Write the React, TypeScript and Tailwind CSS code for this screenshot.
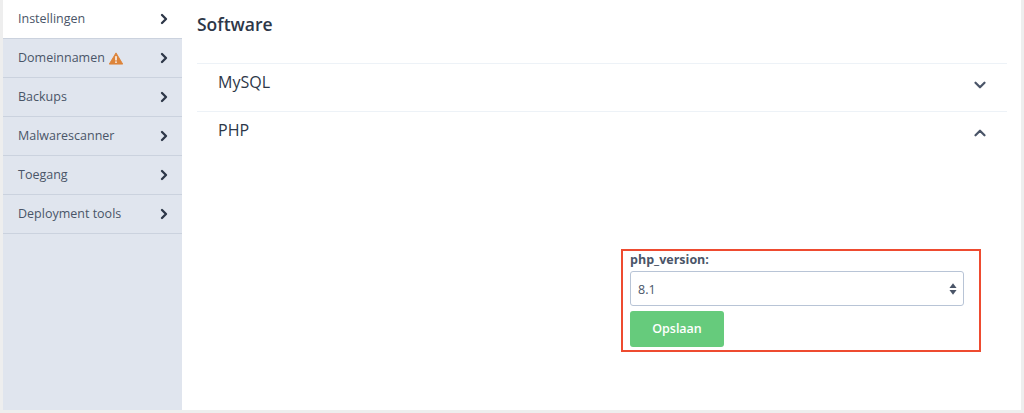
import React from "react";
import { ChevronRight, ChevronDown, ChevronUp } from "lucide-react";

const menuItems = ["Instellingen", "Domeinnamen", "Backups", "Malwarescanner", "Toegang", "Deployment tools"];

const App = () => {
  return (
    <div className="h-[413px] w-[1024px] overflow-hidden bg-[#eeeeee] pl-[3px] pr-[3px] pb-[3px] text-[#374151] font-['Open_Sans',sans-serif]">
      <div className="flex h-full bg-white">
        <div className="w-[179px] shrink-0 bg-[#e0e5ee]">
          {menuItems.map((item, i) => (
            <div
              key={item}
              className={`flex h-[39px] items-center justify-between border-b border-[#cbd2de] pl-[15px] pr-[10px] text-[12.5px] text-[#4a5568] ${i === 0 ? "bg-white" : ""}`}
            >
              <span className="flex items-center gap-1">
                {item}
                {item === "Domeinnamen" && (
                  <svg width="14" height="13" viewBox="0 0 15 13">
                    <path d="M7.5 0.5 L14.7 12.5 L0.3 12.5 Z" fill="#dd843a" stroke="#dd843a" strokeLinejoin="round" />
                    <rect x="6.7" y="4" width="1.6" height="4.6" fill="#fff" />
                    <rect x="6.7" y="9.6" width="1.6" height="1.6" fill="#fff" />
                  </svg>
                )}
              </span>
              <ChevronRight size={16} strokeWidth={3.5} className="text-[#2d3748]" />
            </div>
          ))}
        </div>

        <div className="flex-1 pl-[15px] pr-[14px]">
          <h1 className="h-[64px] border-b border-[#edf2f7] pt-[11px] text-[17.5px] leading-[26px] font-semibold text-[#2d3748]">
            Software
          </h1>
          <div className="flex h-[48px] items-center justify-between border-b border-[#edf2f7] pb-[11px] pl-[21px] pr-[18px] text-[16px] text-[#2d3748]">
            MySQL
            <ChevronDown size={18} strokeWidth={3} className="mt-[5px] text-[#4a5568]" />
          </div>
          <div className="flex h-[47px] items-center justify-between pb-[11px] pl-[21px] pr-[18px] text-[16px] text-[#2d3748]">
            PHP
            <ChevronUp size={18} strokeWidth={3} className="mt-[6px] text-[#4a5568]" />
          </div>

          <div className="ml-[424px] mt-[90px] h-[103px] w-[360px] border-2 border-[#ee4b30] pl-[7px]">
            <div className="text-[12.5px] leading-[17px] font-bold text-[#4a5568]">php_version:</div>
            <div className="mt-[3px] flex h-[35px] w-[334px] items-center justify-between rounded-[3px] border border-[#b8c4d6] bg-white pl-[7px] pr-[6px] pt-[3px] text-[12.5px] text-[#4a5568]">
              8.1
              <svg width="8" height="14" viewBox="0 0 9 14" className="-mt-[3px]">
                <path d="M4.5 0.5 L8.5 6 L0.5 6 Z" fill="#4a5568" />
                <path d="M4.5 13.5 L8.5 8 L0.5 8 Z" fill="#4a5568" />
              </svg>
            </div>
            <button className="mt-[5px] h-[36px] w-[94px] rounded-[3px] bg-[#66cb7c] pt-[1px] text-[12.5px] font-semibold text-white">
              Opslaan
            </button>
          </div>
        </div>
      </div>
    </div>
  );
};

export default App;
